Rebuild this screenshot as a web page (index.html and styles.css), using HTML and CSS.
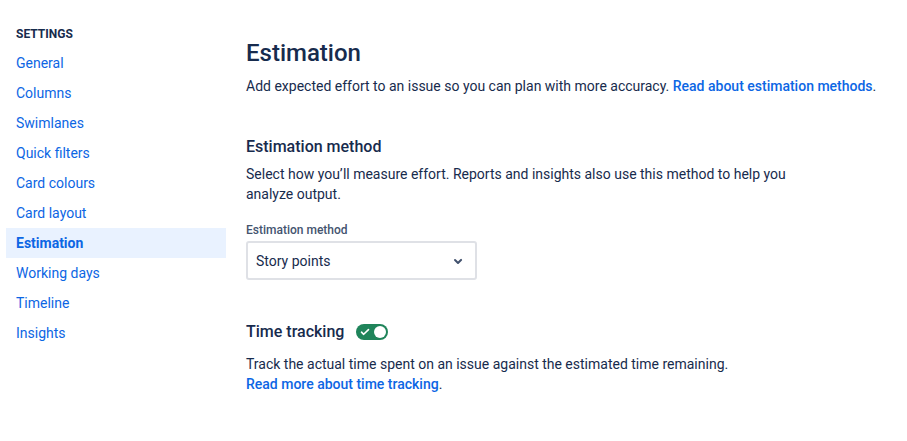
FILE: index.html
```html
<!DOCTYPE html>
<html lang="en">
<head>
<meta charset="utf-8">
<title>Estimation settings</title>
<link rel="stylesheet" href="styles.css">
</head>
<body>
<div class="page">
  <nav class="sidebar">
    <div class="side-title">SETTINGS</div>
    <a class="side-item">General</a>
    <a class="side-item">Columns</a>
    <a class="side-item">Swimlanes</a>
    <a class="side-item">Quick filters</a>
    <a class="side-item">Card colours</a>
    <a class="side-item">Card layout</a>
    <a class="side-item active">Estimation</a>
    <a class="side-item">Working days</a>
    <a class="side-item">Timeline</a>
    <a class="side-item">Insights</a>
  </nav>
  <main class="content">
    <h1 class="title">Estimation</h1>
    <p class="lead">Add expected effort to an issue so you can plan with more accuracy. <a class="link">Read about estimation methods</a>.</p>

    <section class="section method">
      <h2 class="heading">Estimation method</h2>
      <p class="desc">Select how you’ll measure effort. Reports and insights also use this method to help you analyze output.</p>
      <div class="field-label">Estimation method</div>
      <div class="select">
        <span class="select-value">Story points</span>
        <svg class="chevron" width="24" height="24" viewBox="0 0 24 24"><path d="M8.3 10.3a1 1 0 0 1 1.4 0L12 12.6l2.3-2.3a1 1 0 1 1 1.4 1.4l-3 3a1 1 0 0 1-1.4 0l-3-3a1 1 0 0 1 0-1.4z" fill="#42526e"/></svg>
      </div>
    </section>

    <section class="section tracking">
      <div class="heading-row">
        <h2 class="heading">Time tracking</h2>
        <span class="toggle">
          <svg class="check" width="10" height="8" viewBox="0 0 10 8"><path d="M1.5 4.2l2.2 2.1L8.5 1.6" fill="none" stroke="#fff" stroke-width="1.6" stroke-linecap="round" stroke-linejoin="round"/></svg>
          <span class="knob"></span>
        </span>
      </div>
      <p class="desc">Track the actual time spent on an issue against the estimated time remaining.<br><a class="link">Read more about time tracking</a>.</p>
    </section>
  </main>
</div>
</body>
</html>
```

FILE: styles.css
```css
html, body {
  margin: 0;
  padding: 0;
  background: #ffffff;
}

body {
  font-family: Roboto, "Noto Sans", sans-serif;
  color: #172b4d;
  font-size: 14px;
}

.page {
  display: flex;
  align-items: flex-start;
}

.sidebar {
  width: 220px;
  margin-left: 6px;
  padding-top: 23px;
  display: flex;
  flex-direction: column;
  flex-shrink: 0;
}

.side-title {
  font-size: 12px;
  font-weight: 700;
  color: #172b4d;
  padding-left: 10px;
  height: 22px;
  line-height: 22px;
  margin-bottom: 3px;
}

.side-item {
  display: block;
  height: 30px;
  line-height: 30px;
  padding-left: 10px;
  color: #0c66e4;
  font-size: 14px;
  text-decoration: none;
}

.side-item.active {
  background: #e9f2ff;
  font-weight: 700;
}

.content {
  margin-left: 20px;
  padding-top: 35px;
  flex: 1;
}

.title {
  margin: 0;
  font-size: 24px;
  font-weight: 500;
  line-height: 36px;
  color: #172b4d;
}

.lead {
  margin: 5px 0 0;
  line-height: 20px;
  color: #172b4d;
}

.link {
  color: #0c66e4;
  font-weight: 500;
  text-decoration: none;
}

.section.method {
  margin-top: 39px;
}

.heading {
  margin: 0;
  font-size: 16px;
  font-weight: 500;
  line-height: 24px;
  color: #172b4d;
}

.desc {
  margin: 5px 0 0;
  line-height: 20px;
  max-width: 545px;
  color: #172b4d;
}

.field-label {
  margin-top: 18px;
  font-size: 12px;
  font-weight: 500;
  line-height: 16px;
  color: #44546f;
}

.select {
  box-sizing: border-box;
  margin-top: 3px;
  width: 231px;
  height: 39px;
  border: 2px solid #dfe1e6;
  border-radius: 3px;
  display: flex;
  align-items: center;
  justify-content: space-between;
  padding: 0 5px 0 8px;
}

.select-value {
  color: #172b4d;
  font-size: 14px;
}

.chevron {
  display: block;
}

.section.tracking {
  margin-top: 40px;
}

.heading-row {
  display: flex;
  align-items: center;
  gap: 12px;
}

.toggle {
  width: 32px;
  height: 16px;
  border-radius: 8px;
  background: #1f845a;
  display: flex;
  align-items: center;
  justify-content: space-between;
  padding: 0 2px 0 4px;
  box-sizing: border-box;
}

.check {
  display: block;
}

.knob {
  width: 12px;
  height: 12px;
  border-radius: 50%;
  background: #ffffff;
}

.tracking .desc {
  margin-top: 10px;
}
```
